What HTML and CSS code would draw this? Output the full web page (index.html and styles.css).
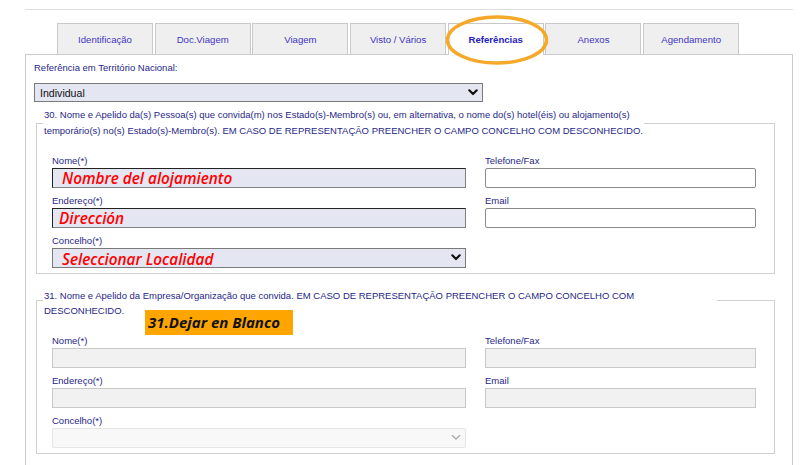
FILE: index.html
```html
<!DOCTYPE html>
<html lang="pt">
<head>
<meta charset="utf-8">
<title>Referências</title>
<link rel="stylesheet" href="styles.css">
</head>
<body>
<div class="page">
  <div class="rule"></div>
  <nav class="tabs">
    <a class="tab">Identificação</a>
    <a class="tab">Doc.Viagem</a>
    <a class="tab">Viagem</a>
    <a class="tab">Visto / Vários</a>
    <a class="tab active">Referências</a>
    <a class="tab">Anexos</a>
    <a class="tab">Agendamento</a>
    <svg class="ring" viewBox="0 0 106 54" aria-hidden="true"><ellipse cx="53" cy="27" rx="49.5" ry="23" fill="none" stroke="#f6a828" stroke-width="3.5"/></svg>
  </nav>
  <div class="panel">
    <div class="top-label">Referência em Território Nacional:</div>
    <div class="sel-wrap sel-wrap-main">
      <select class="sel sel-main"><option>Individual</option></select>
      <svg class="chev" viewBox="0 0 10 7" aria-hidden="true"><path d="M1.3 1.3 L5 5 L8.7 1.3" fill="none" stroke="#111" stroke-width="2.2" stroke-linecap="round" stroke-linejoin="round"/></svg>
    </div>

    <fieldset class="group">
      <legend class="legend">30. Nome e Apelido da(s) Pessoa(s) que convida(m) nos Estado(s)-Membro(s) ou, em alternativa, o nome do(s) hotel(éis) ou alojamento(s)<br>temporário(s) no(s) Estado(s)-Membro(s). EM CASO DE REPRESENTAÇÃO PREENCHER O CAMPO CONCELHO COM DESCONHECIDO.</legend>
      <div class="fields">
        <div class="col">
          <div class="field">
            <label class="lbl">Nome(*)</label>
            <input class="inp inp-hl hint" value="Nombre del alojamiento">
          </div>
          <div class="field">
            <label class="lbl">Endereço(*)</label>
            <input class="inp inp-hl hint hint-tight" value="Dirección">
          </div>
          <div class="field">
            <label class="lbl">Concelho(*)</label>
            <div class="sel-wrap">
              <select class="sel sel-hl hint"><option>Seleccionar Localidad</option></select>
              <svg class="chev" viewBox="0 0 10 7" aria-hidden="true"><path d="M1.3 1.3 L5 5 L8.7 1.3" fill="none" stroke="#111" stroke-width="2.2" stroke-linecap="round" stroke-linejoin="round"/></svg>
            </div>
          </div>
        </div>
        <div class="col">
          <div class="field">
            <label class="lbl">Telefone/Fax</label>
            <input class="inp inp-plain">
          </div>
          <div class="field">
            <label class="lbl">Email</label>
            <input class="inp inp-plain">
          </div>
        </div>
      </div>
    </fieldset>

    <fieldset class="group group-next">
      <legend class="legend legend-wide">31. Nome e Apelido da Empresa/Organização que convida. EM CASO DE REPRESENTAÇÃO PREENCHER O CAMPO CONCELHO COM<br>DESCONHECIDO.</legend>
      <div class="fields fields-alt">
        <div class="tag">31.Dejar en Blanco</div>
        <div class="col">
          <div class="field">
            <label class="lbl">Nome(*)</label>
            <input class="inp inp-off" disabled>
          </div>
          <div class="field">
            <label class="lbl">Endereço(*)</label>
            <input class="inp inp-off" disabled>
          </div>
          <div class="field">
            <label class="lbl">Concelho(*)</label>
            <div class="sel-wrap">
              <select class="sel sel-off" disabled><option></option></select>
              <svg class="chev" viewBox="0 0 10 7" aria-hidden="true"><path d="M1.3 1.6 L5 5 L8.7 1.6" fill="none" stroke="#a8a8a8" stroke-width="1.3" stroke-linecap="round" stroke-linejoin="round"/></svg>
            </div>
          </div>
        </div>
        <div class="col">
          <div class="field">
            <label class="lbl">Telefone/Fax</label>
            <input class="inp inp-off" disabled>
          </div>
          <div class="field">
            <label class="lbl">Email</label>
            <input class="inp inp-off" disabled>
          </div>
        </div>
      </div>
    </fieldset>
  </div>
</div>
</body>
</html>
```
FILE: styles.css
```css
html, body {
  margin: 0;
  padding: 0;
  overflow: hidden;
  background: #fff;
}
body {
  font-family: "Liberation Sans", Arial, Helvetica, sans-serif;
}
.page {
  padding-left: 25px;
  width: 768px;
}
.rule {
  margin-top: 9px;
  height: 1px;
  background: #dcdcdc;
}
.tabs {
  position: relative;
  display: flex;
  align-items: flex-start;
  gap: 1.7px;
  margin: 13px 0 0 32px;
  height: 31px;
}
.tab {
  box-sizing: border-box;
  width: 96px;
  height: 31px;
  background: #efefef;
  border: 1px solid #c9c9c9;
  border-bottom: none;
  display: flex;
  align-items: center;
  justify-content: center;
  font-size: 9.6px;
  color: #4433c6;
  text-decoration: none;
}
.tab.active {
  position: relative;
  height: 32px;
  padding-bottom: 1px;
  background: #fff;
  font-weight: bold;
  color: #2323c0;
}
.ring {
  position: absolute;
  left: 387px;
  top: -10px;
  width: 106px;
  height: 54px;
  pointer-events: none;
}
.panel {
  border: 1px solid #cbcbcb;
  border-bottom: none;
  padding: 7px 8px 40px;
}
.top-label {
  font-size: 9.5px;
  line-height: 12px;
  color: #1f1f88;
}
.sel-wrap {
  position: relative;
}
.sel-wrap-main {
  width: 449px;
  margin-top: 9px;
}
.sel {
  -webkit-appearance: none;
  appearance: none;
  box-sizing: border-box;
  display: block;
  width: 100%;
  height: 20px;
  margin: 0;
  padding: 0 8px;
  border: 1px solid #7a7a7a;
  border-radius: 0;
  outline: none;
}
.sel-main {
  height: 19px;
  padding-left: 5px;
  background: #e4e6f2;
  font-family: "Liberation Sans", Arial, sans-serif;
  font-size: 10.6px;
  color: #111;
}
.sel-hl {
  background: #e4e6f2;
}
.sel-off {
  background: #f6f6f6;
  border-color: #dcdcdc;
  border-radius: 2px;
}
.chev {
  position: absolute;
  right: 5px;
  top: 6px;
  width: 10px;
  height: 7px;
}
.group {
  margin: 5px 9px 0 2px;
  padding: 0;
  border: 1px solid #d0d0d0;
  min-width: 0;
}
.group-next {
  margin-top: 8px;
}
.legend {
  margin-left: 6px;
  padding: 0 1px;
  font-size: 9.5px;
  line-height: 16px;
  color: #1f1f88;
}
.legend-wide {
  box-sizing: border-box;
  width: 674px;
  padding-top: 6px;
  line-height: 15px;
}
.fields {
  position: relative;
  display: grid;
  grid-template-columns: 414px 271px;
  column-gap: 19px;
  padding: 16px 17px 5px 15px;
}
.fields-alt {
  padding-top: 17px;
}
.col {
  display: flex;
  flex-direction: column;
  gap: 7px;
}
.field {
  display: flex;
  flex-direction: column;
  gap: 1px;
}
.lbl {
  font-size: 9.5px;
  line-height: 12px;
  color: #1f1f88;
}
.inp {
  box-sizing: border-box;
  display: block;
  width: 100%;
  height: 20px;
  margin: 0;
  padding: 0 8px;
  border: 1px solid;
  outline: none;
  font-family: "Liberation Sans", Arial, sans-serif;
  font-size: 11px;
}
.inp-hl {
  background: #e4e6f2;
  border-color: #222 #808080 #808080 #222;
}
.inp-plain {
  background: #fff;
  border-color: #8a8a8a;
  border-radius: 2px;
}
.inp-off {
  background: #f1f1f1;
  border-color: #c8c8c8;
}
.hint {
  color: #ff0000;
  font-family: "Open Sans", "Liberation Sans", sans-serif;
  font-style: italic;
  font-weight: 600;
  font-size: 15.3px;
  padding-left: 9px;
}
.hint-tight {
  padding-left: 6px;
}
.tag {
  position: absolute;
  left: 108px;
  top: -8px;
  box-sizing: border-box;
  width: 148px;
  height: 25px;
  padding-left: 3px;
  background: #ffa500;
  color: #111;
  font-family: "Open Sans", "Liberation Sans", sans-serif;
  font-style: italic;
  font-weight: 700;
  font-size: 15px;
  line-height: 25px;
}
```
